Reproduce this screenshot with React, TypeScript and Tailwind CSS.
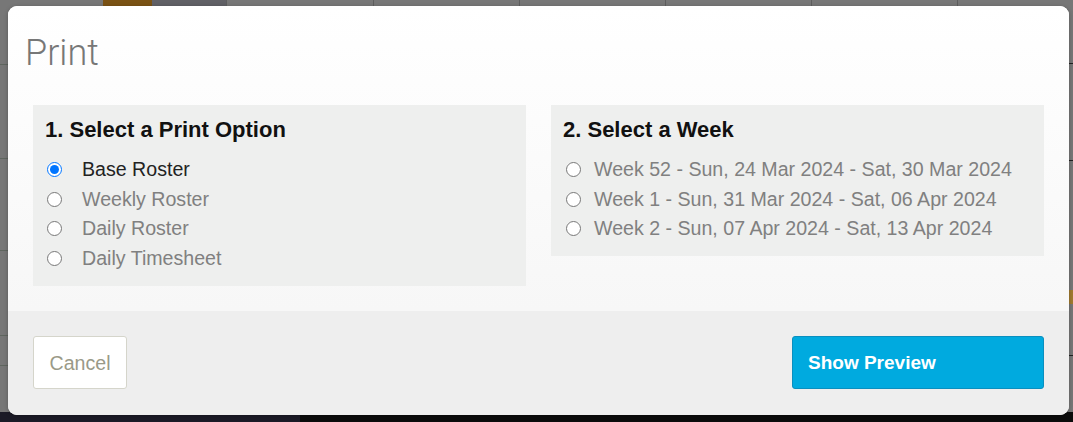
import React from "react";

const font = { fontFamily: '"Liberation Sans", Arial, sans-serif' };

function Radio({ checked }: { checked?: boolean }) {
  return (
    <input
      type="radio"
      checked={!!checked}
      readOnly
      className="m-0 h-[15px] w-[15px] shrink-0 accent-[#0075ff]"
    />
  );
}

export default function App() {
  const options = ["Base Roster", "Weekly Roster", "Daily Roster", "Daily Timesheet"];
  const weeks = [
    "Week 52 - Sun, 24 Mar 2024 - Sat, 30 Mar 2024",
    "Week 1 - Sun, 31 Mar 2024 - Sat, 06 Apr 2024",
    "Week 2 - Sun, 07 Apr 2024 - Sat, 13 Apr 2024",
  ];
  return (
    <div className="relative h-[422px] w-[1073px] overflow-hidden bg-[#777777]" style={font}>
      {/* dimmed page behind the dialog */}
      <div className="absolute left-[103px] top-0 h-[8px] w-[49px] bg-[#7a5214]" />
      <div className="absolute left-[152px] top-0 h-[8px] w-[74px] bg-[#616166]" />
      {[226, 373, 519, 665, 811, 957].map((x) => (
        <div key={x} className="absolute top-0 h-[8px] w-px bg-[#5e5e5e]" style={{ left: x }} />
      ))}
      {[64, 158, 250, 335, 365].map((y) => (
        <div key={y} className="absolute left-0 h-px w-[8px] bg-[#5f665f]" style={{ top: y }} />
      ))}
      {[63, 160, 355].map((y) => (
        <div key={y} className="absolute right-0 h-px w-[5px] bg-[#222]" style={{ top: y }} />
      ))}
      <div className="absolute right-0 top-[290px] h-[14px] w-[4px] bg-[#a07a30]" />
      <div className="absolute bottom-0 left-0 h-[10px] w-[300px] bg-[#1b1a26]" />
      <div className="absolute bottom-0 left-[300px] h-[10px] w-[773px] bg-[#0b0b0b]" />

      {/* dialog */}
      <div className="absolute left-[8px] top-[6px] flex h-[409px] w-[1061px] flex-col overflow-hidden rounded-[9px] bg-white shadow-[0_1px_4px_rgba(0,0,0,0.25)]">
        <div className="flex flex-1 flex-col bg-gradient-to-b from-white to-[#f7f7f7]">
          <div
            className="px-[17px] pt-[27px] text-[36px] font-light leading-[40px] text-[#777777]"
            style={{ fontFamily: 'Roboto, "Liberation Sans", sans-serif' }}
          >
            Print
          </div>
          <div className="mt-[32px] grid grid-cols-2 items-start gap-[25px] px-[25px]">
            <div className="h-[181px] bg-[#eeefee] px-[12px] pt-[12px]">
              <div className="text-[22px] font-bold leading-[26px] text-[#111]">
                1. Select a Print Option
              </div>
              <div className="mt-[12px] flex flex-col">
                {options.map((o, i) => (
                  <label key={o} className="flex h-[29.5px] items-center">
                    <span className="ml-[2px] flex w-[35px] items-center">
                      <Radio checked={i === 0} />
                    </span>
                    <span
                      className={
                        "text-[19.6px] leading-[29px] " + (i === 0 ? "text-[#222222]" : "text-[#808080]")
                      }
                    >
                      {o}
                    </span>
                  </label>
                ))}
              </div>
            </div>
            <div className="h-[151px] bg-[#eeefee] px-[12px] pt-[12px]">
              <div className="text-[22px] font-bold leading-[26px] text-[#111]">2. Select a Week</div>
              <div className="mt-[12px] flex flex-col">
                {weeks.map((w) => (
                  <label key={w} className="flex h-[29.5px] items-center">
                    <span className="ml-[3px] flex w-[28px] items-center">
                      <Radio />
                    </span>
                    <span className="text-[19.6px] leading-[29px] text-[#808080]">{w}</span>
                  </label>
                ))}
              </div>
            </div>
          </div>
        </div>
        <div className="flex h-[104px] items-center justify-between bg-[#eeeeee] px-[25px] pb-[1px]">
          <button className="h-[53px] w-[94px] rounded-[3px] border border-[#d5d5cb] bg-white pt-[2px] text-[19.6px] text-[#9a9a88]">
            Cancel
          </button>
          <button className="h-[53px] w-[252px] rounded-[3px] border border-[#0a8fbf] bg-[#00aadf] pl-[15px] pt-[2px] text-left text-[19px] font-bold text-white">
            Show Preview
          </button>
        </div>
      </div>
    </div>
  );
}
